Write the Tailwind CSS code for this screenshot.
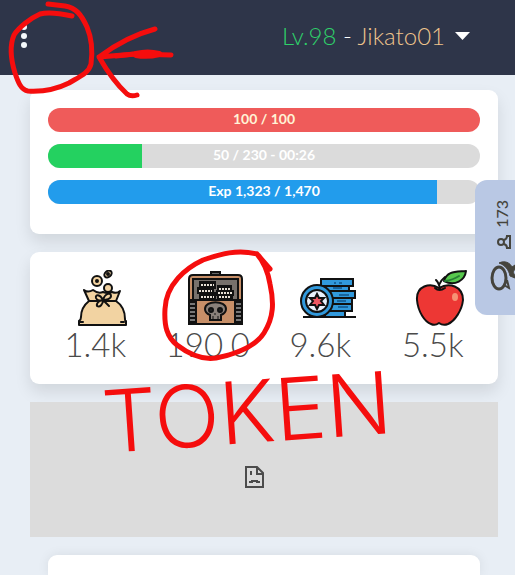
<!DOCTYPE html>
<html lang="en">
<head>
    <meta charset="UTF-8">
    <meta name="viewport" content="width=device-width, initial-scale=1.0">
    <title>Jikato01</title>
    <script src="https://cdn.jsdelivr.net/npm/@tailwindcss/browser@4"></script>
</head>
<body class="relative min-h-screen bg-[#e8eef5] font-['Lato',sans-serif] text-[#4a4a4a]">
    <!-- Top bar -->
    <header class="flex h-[75px] items-start justify-between bg-[#2e3549] pl-[18px] pr-[45px] pt-[22px]">
        <button type="button" aria-label="Menu" class="flex w-3 justify-center pt-[2px]">
            <svg class="h-6 w-2" viewBox="0 0 8 24" fill="#f5f9fc">
                <circle cx="4" cy="3" r="3"/>
                <circle cx="4" cy="12" r="3"/>
                <circle cx="4" cy="21" r="3"/>
            </svg>
        </button>
        <button type="button" class="flex items-center gap-[10px] text-2xl leading-7 font-light text-white">
            <span class="whitespace-nowrap"><span class="text-[#2fd069]">Lv.98</span> - <span class="text-[#efc48c]">Jikato01</span></span>
            <svg class="h-2 w-[15px]" viewBox="0 0 15 8" fill="#fff"><path d="M0 0h15L7.500 8z"/></svg>
        </button>
    </header>

    <main class="flex flex-col gap-[18px] pt-[15px] pr-[17px] pl-[30px]">
        <!-- Player bars -->
        <section class="flex flex-col gap-3 rounded-[9px] bg-white px-[18px] pt-[18px] pb-[30px] text-sm leading-6 font-bold text-white shadow-[0_8px_16px_rgba(10,10,10,0.1)]">
            <div class="relative h-6 overflow-hidden rounded-full bg-[#dbdbdb] text-center">
                <div class="h-6 bg-[#ef5b5a]" style="width: 100%"></div>
                <span class="absolute inset-x-0 top-[-1px] text-[#fff3d6]">100 / 100</span>
            </div>
            <div class="relative h-6 overflow-hidden rounded-full bg-[#dbdbdb] text-center">
                <div class="h-6 bg-[#24d160]" style="width: 21.7%"></div>
                <span class="absolute inset-x-0 top-[-1px]">50 / 230 - 00:26</span>
            </div>
            <div class="relative h-6 overflow-hidden rounded-full bg-[#dbdbdb] text-center">
                <div class="h-6 bg-[#229cec]" style="width: 90%"></div>
                <span class="absolute inset-x-0 top-[-1px]">Exp 1,323 / 1,470</span>
            </div>
        </section>

        <!-- Resources -->
        <section class="grid grid-cols-4 rounded-[9px] bg-white px-[9px] pt-[18px] pb-[22px] text-center text-[33px] leading-9 font-light shadow-[0_8px_16px_rgba(10,10,10,0.1)]">
            <div class="flex flex-col items-center">
                <div class="pl-4">
                    <svg class="h-14 w-14" viewBox="0 0 56 56" fill="#f2d3a2" stroke="#111" stroke-width="2" stroke-linejoin="round" stroke-linecap="round">
                        <circle cx="22" cy="11" r="5"/><circle cx="22" cy="11" r="1" fill="#9a6f55"/>
                        <ellipse cx="33" cy="4" rx="4" ry="3" transform="rotate(-40 33 4)"/><circle cx="33" cy="4" r="1"/>
                        <circle cx="33" cy="18" r="4"/>
                        <path d="M9 20q4 3 9 0q5 4 10 2q5 2 9 0q5 2 8-1l-4 10c6 4 9 11 9 18q0 2 1 2v4H4v-4q2-1 2-4c0-7 3-12 8-16z"/>
                        <path d="M14 31h27M5 52h3M46 52h3" fill="none"/>
                        <path d="M28 30c-3-6-8-6-7-2c1 3 5 3 7 2c2-7 8-8 8-4c0 3-5 4-8 4c-3 0-7 3-6 6c3 2 6-2 6-6l6 6"/>
                    </svg>
                </div>
                <p>1.4k</p>
            </div>
            <div class="flex flex-col items-center">
                <div class="pl-4">
                    <svg class="h-14 w-14" viewBox="0 0 56 56" stroke="#111" stroke-width="2">
                        <path d="M23 5V2h9v3" fill="#666"/>
                        <path d="M1 54V9q0-4 4-4h45q4 0 4 4v45z" fill="#c78f68"/>
                        <path d="M5 30V9h45v21z" fill="#77716c"/>
                        <path d="M12 12h15v6H12zM10 18h15v5H10zM12 23h15v6H12zM30 16h13v5H30zM29 21h16v4H29zM30 25h14v4H30z" fill="#111"/>
                        <path d="M13 15h13M11 21h13M13 27h13M31 19h12M30 23h14M31 27h12" stroke="#e8e1d6" stroke-dasharray="2 1"/>
                        <path d="M1 30h53v24H1z" fill="#c78f68"/>
                        <path d="M1 32h7v20H1zM47 32h7v20h-7z" fill="#777"/>
                        <path d="M2 36h6M2 40h6M2 44h6M2 48h6M47 36h6M47 40h6M47 44h6M47 48h6"/>
                        <path d="M22 50v-5q-5-2-5-6c0-9 21-9 21 0q0 4-5 6v5z" fill="#8a817a"/>
                        <circle cx="23" cy="40" r="2" fill="#222"/><circle cx="32" cy="40" r="2" fill="#222"/>
                        <path d="M27 43v2M25 46v4M30 46v4" stroke-width="1"/>
                    </svg>
                </div>
                <p>190.0</p>
            </div>
            <div class="flex flex-col items-center">
                <div class="pl-4">
                    <svg class="h-14 w-14" viewBox="0 0 56 56" fill="#3199dc" stroke="#111" stroke-width="2">
                        <path d="M21 9h32v7H21zM25 16h24v5H25zM25 21h30v7H25zM28 28h24v6H28zM28 34h24v7H28zM25 41h20v6H25z"/>
                        <path d="M34 13h2M39 13h3M33 18h9M39 25h10M37 31h9M38 37h10" stroke="#17649d"/>
                        <path d="M3 47h53"/>
                        <circle cx="17" cy="31" r="16"/>
                        <circle cx="17" cy="31" r="11" fill="#e9f1fc"/>
                        <path d="M17 24l2 4h5l-3 3l3 4h-5l-2 4l-2-4h-5l3-4l-3-3h5z" fill="#ee5863"/>
                    </svg>
                </div>
                <p>9.6k</p>
            </div>
            <div class="flex flex-col items-center">
                <div class="pl-4">
                    <svg class="h-14 w-14" viewBox="0 0 56 56" stroke="#111" stroke-width="2" stroke-linejoin="round" stroke-linecap="round">
                        <path d="M26 18c-9-6-23-2-22 12c1 12 8 22 14 24q4 2 8-1q4 3 9 1c7-3 14-14 15-24c0-14-14-18-24-12z" fill="#ed3734"/>
                        <path d="M22 18q4 4 10 0M27 19q-1-6-4-9M26 15q2-5 6-8" fill="none"/>
                        <path d="M31 11C34 1 42 2 53 1c-1 9-11 16-22 10z" fill="#57c84d"/>
                        <path d="M32 11q8-1 14-5" fill="none" stroke="#277f35"/>
                        <ellipse cx="42" cy="27" rx="3" ry="4" fill="#f69274" stroke="none"/>
                    </svg>
                </div>
                <p>5.5k</p>
            </div>
        </section>

        <!-- Banner that failed to load -->
        <div class="flex h-[135px] items-center justify-center bg-[#dcdcdc] pt-[14px] pr-[20px]">
            <svg class="h-[22px] w-[19px]" viewBox="0 0 19 22" fill="none" stroke="#4c4c4c" stroke-width="2">
                <path d="M1 1h11l6 6v14H1zM12 1v7h6M6 5v4M5 17v-1h2v-1h5v1h2v1"/>
            </svg>
        </div>

        <section class="mx-[18px] h-5 rounded-t-[9px] bg-white shadow-[0_0_12px_rgba(10,10,10,0.08)]"></section>
    </main>

    <!-- Chat tab -->
    <button type="button" aria-label="Chat, 173 online" class="absolute top-[180px] right-0 flex h-[135px] w-10 flex-col items-end rounded-l-[12px] bg-[#b9c8e4] pt-5 text-[#45443d]">
        <span class="mr-[3px] rotate-180 text-base leading-5 font-medium [writing-mode:vertical-rl]">173</span>
        <svg class="mt-[6px] mr-1 h-4 w-[14px]" viewBox="0 0 14 16" fill="none" stroke="#45443d" stroke-width="2">
            <circle cx="4" cy="8" r="3"/>
            <path d="M7 6q3-1 3-4h3v12h-3q0-3-3-4"/>
        </svg>
        <svg class="mt-[10px] h-8 w-[25px]" viewBox="0 0 25 32" fill="none" stroke="#45443d" stroke-width="3">
            <path d="M9 3c6-3 11 0 13 4l3-2v4l-2 3l2 4v2l-5-2c-1-6-5-11-11-13z" fill="#45443d" stroke-width="1"/>
            <ellipse cx="9" cy="18" rx="7" ry="11"/>
            <path d="M14 25l5 3l-2-8" stroke-width="2"/>
        </svg>
    </button>

    <!-- Red pen marks -->
    <svg class="pointer-events-none absolute top-0 left-0 h-[575px] w-[515px]" viewBox="0 0 515 575" fill="none" stroke="#f50d0d" stroke-width="5" stroke-linecap="round" stroke-linejoin="round">
        <path d="M72 16C58 13 48 12 40 14C31 18 19 27 14 35C9 47 11 60 15 73C18 82 21 90 28 91C45 92 59 88 69 83C79 77 89 73 91 64C93 49 92 39 87 27C81 14 76 8 65 6L48 4"/>
        <path d="M155 29C136 34 119 42 99 57C107 71 114 82 127 94Q131 97 137 95M99 57L135 54"/>
        <path d="M116 56L135 54L171 55"/>
        <path d="M136 54Q148 51 159 54Q148 57 136 55z" stroke-width="6"/>
        <path d="M270 269L257 254C237 249 221 254 203 260C186 268 166 284 165 309C164 326 167 337 177 345C190 355 203 360 216 358C236 354 255 347 264 333C274 317 274 302 270 284C268 272 265 263 257 254M259 256L266 265"/>
    </svg>
    <span class="pointer-events-none absolute top-[380px] left-[102px] -rotate-4 font-['Inter',sans-serif] text-[86px] leading-[64px] font-light text-[#f50d0d]">TOKEN</span>
</body>
</html>
